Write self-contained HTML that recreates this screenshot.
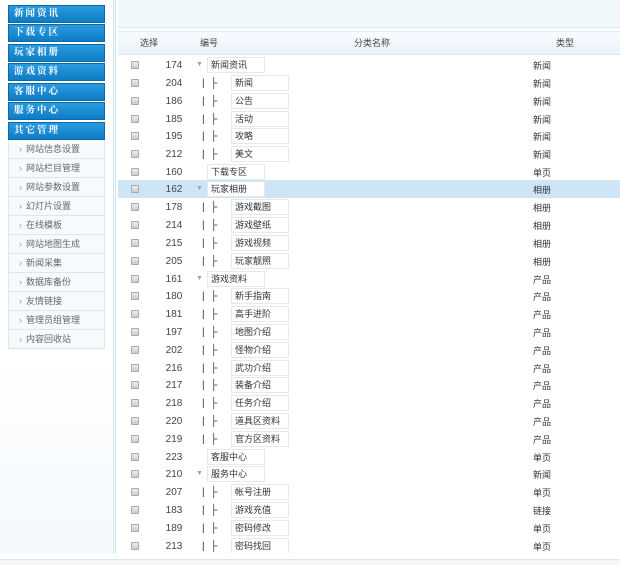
<!DOCTYPE html><html><head><meta charset="utf-8"><style>
*{margin:0;padding:0;box-sizing:border-box}
body{width:620px;height:565px;background:#fff;position:relative;overflow:hidden;font-family:"Liberation Sans","Noto Sans CJK SC",sans-serif;font-size:9px;color:#333}
.a{position:absolute}
.side{left:0;top:0;width:112px;height:560px;background:linear-gradient(#fff 0,#fff 360px,#f2f8fc 560px)}
.h{position:absolute;left:8px;width:97px;height:18px;background:linear-gradient(#2b9be0,#0e7cc4);color:#fff;font-weight:bold;font-size:9.5px;line-height:17px;padding-left:5px;border:1px solid #0a6aa8;font-family:"Liberation Serif","Noto Serif CJK SC",serif;letter-spacing:2px}
.s{position:absolute;left:8px;width:97px;height:19px;border:1px solid #dde7ee;border-top:none;background:#f7fafc;color:#666;font-size:9px;line-height:18px;padding-left:10px}
.s:before{content:"›";color:#999;margin-right:4px}
.row{position:absolute;left:118px;width:502px;height:18px;line-height:18px}
.cb{position:absolute;left:13px;top:5px;width:8px;height:8px;border:1px solid #aaa;background:linear-gradient(#eee,#ccc);border-radius:1px}
.n{position:absolute;left:45px;top:1px;width:22px;text-align:center;font-size:10px;color:#444}
.ar{position:absolute;left:78px;color:#8ab;font-size:7px}
.bx{position:absolute;top:1px;height:16px;width:58px;border:1px solid #e3e9ed;background:#fff;line-height:15px;padding-left:3px;font-size:9px;color:#333}
.t{position:absolute;left:415px;top:1px;font-size:9px}
.tr{position:absolute;left:84px;top:1px;font-size:10px;color:#333}
</style></head><body>
<div class="a side"></div>
<div class="h" style="top:5px">新闻资讯</div>
<div class="h" style="top:24px">下载专区</div>
<div class="h" style="top:44px">玩家相册</div>
<div class="h" style="top:63px">游戏资料</div>
<div class="h" style="top:83px">客服中心</div>
<div class="h" style="top:102px">服务中心</div>
<div class="h" style="top:122px">其它管理</div>
<div class="s" style="top:140px">网站信息设置</div>
<div class="s" style="top:159px">网站栏目管理</div>
<div class="s" style="top:178px">网站参数设置</div>
<div class="s" style="top:197px">幻灯片设置</div>
<div class="s" style="top:216px">在线模板</div>
<div class="s" style="top:235px">网站地图生成</div>
<div class="s" style="top:254px">新闻采集</div>
<div class="s" style="top:273px">数据库备份</div>
<div class="s" style="top:292px">友情链接</div>
<div class="s" style="top:311px">管理员组管理</div>
<div class="s" style="top:330px">内容回收站</div>
<div class="a" style="left:113px;top:0;width:1px;height:553px;background:#cfe3ef"></div>
<div class="a" style="left:115px;top:0;width:1px;height:553px;background:#cfe3ef"></div>
<div class="a" style="left:118px;top:0;width:502px;height:28px;background:#f1f8fc;border-bottom:1px solid #dbe9f1"></div>
<div class="a" style="left:118px;top:31px;width:502px;height:24px;background:linear-gradient(#f7fbfd,#eaf3f9);border-top:1px solid #e0ecf3;border-bottom:1px solid #dbe9f1;line-height:23px;font-size:9px;color:#444">
<span class="a" style="left:22px">选择</span><span class="a" style="left:82px">编号</span><span class="a" style="left:236px">分类名称</span><span class="a" style="left:438px">类型</span></div>
<div class="row" style="top:56px"><i class="cb"></i><span class="n">174</span><span class="ar">▼</span><span class="bx" style="left:89px">新闻资讯</span><span class="t">新闻</span></div>
<div class="row" style="top:74px"><i class="cb"></i><span class="n">204</span><span class="tr">|&nbsp;&nbsp;├</span><span class="bx" style="left:113px">新闻</span><span class="t">新闻</span></div>
<div class="row" style="top:92px"><i class="cb"></i><span class="n">186</span><span class="tr">|&nbsp;&nbsp;├</span><span class="bx" style="left:113px">公告</span><span class="t">新闻</span></div>
<div class="row" style="top:110px"><i class="cb"></i><span class="n">185</span><span class="tr">|&nbsp;&nbsp;├</span><span class="bx" style="left:113px">活动</span><span class="t">新闻</span></div>
<div class="row" style="top:127px"><i class="cb"></i><span class="n">195</span><span class="tr">|&nbsp;&nbsp;├</span><span class="bx" style="left:113px">攻略</span><span class="t">新闻</span></div>
<div class="row" style="top:145px"><i class="cb"></i><span class="n">212</span><span class="tr">|&nbsp;&nbsp;├</span><span class="bx" style="left:113px">美文</span><span class="t">新闻</span></div>
<div class="row" style="top:163px"><i class="cb"></i><span class="n">160</span><span class="bx" style="left:89px">下载专区</span><span class="t">单页</span></div>
<div class="row" style="top:180px;background:#cde5f7"><i class="cb"></i><span class="n">162</span><span class="ar">▼</span><span class="bx" style="left:89px">玩家相册</span><span class="t">相册</span></div>
<div class="row" style="top:198px"><i class="cb"></i><span class="n">178</span><span class="tr">|&nbsp;&nbsp;├</span><span class="bx" style="left:113px">游戏截图</span><span class="t">相册</span></div>
<div class="row" style="top:216px"><i class="cb"></i><span class="n">214</span><span class="tr">|&nbsp;&nbsp;├</span><span class="bx" style="left:113px">游戏壁纸</span><span class="t">相册</span></div>
<div class="row" style="top:234px"><i class="cb"></i><span class="n">215</span><span class="tr">|&nbsp;&nbsp;├</span><span class="bx" style="left:113px">游戏视频</span><span class="t">相册</span></div>
<div class="row" style="top:252px"><i class="cb"></i><span class="n">205</span><span class="tr">|&nbsp;&nbsp;├</span><span class="bx" style="left:113px">玩家靓照</span><span class="t">相册</span></div>
<div class="row" style="top:270px"><i class="cb"></i><span class="n">161</span><span class="ar">▼</span><span class="bx" style="left:89px">游戏资料</span><span class="t">产品</span></div>
<div class="row" style="top:287px"><i class="cb"></i><span class="n">180</span><span class="tr">|&nbsp;&nbsp;├</span><span class="bx" style="left:113px">新手指南</span><span class="t">产品</span></div>
<div class="row" style="top:305px"><i class="cb"></i><span class="n">181</span><span class="tr">|&nbsp;&nbsp;├</span><span class="bx" style="left:113px">高手进阶</span><span class="t">产品</span></div>
<div class="row" style="top:323px"><i class="cb"></i><span class="n">197</span><span class="tr">|&nbsp;&nbsp;├</span><span class="bx" style="left:113px">地图介绍</span><span class="t">产品</span></div>
<div class="row" style="top:341px"><i class="cb"></i><span class="n">202</span><span class="tr">|&nbsp;&nbsp;├</span><span class="bx" style="left:113px">怪物介绍</span><span class="t">产品</span></div>
<div class="row" style="top:359px"><i class="cb"></i><span class="n">216</span><span class="tr">|&nbsp;&nbsp;├</span><span class="bx" style="left:113px">武功介绍</span><span class="t">产品</span></div>
<div class="row" style="top:376px"><i class="cb"></i><span class="n">217</span><span class="tr">|&nbsp;&nbsp;├</span><span class="bx" style="left:113px">装备介绍</span><span class="t">产品</span></div>
<div class="row" style="top:394px"><i class="cb"></i><span class="n">218</span><span class="tr">|&nbsp;&nbsp;├</span><span class="bx" style="left:113px">任务介绍</span><span class="t">产品</span></div>
<div class="row" style="top:412px"><i class="cb"></i><span class="n">220</span><span class="tr">|&nbsp;&nbsp;├</span><span class="bx" style="left:113px">道具区资料</span><span class="t">产品</span></div>
<div class="row" style="top:430px"><i class="cb"></i><span class="n">219</span><span class="tr">|&nbsp;&nbsp;├</span><span class="bx" style="left:113px">官方区资料</span><span class="t">产品</span></div>
<div class="row" style="top:448px"><i class="cb"></i><span class="n">223</span><span class="bx" style="left:89px">客服中心</span><span class="t">单页</span></div>
<div class="row" style="top:465px"><i class="cb"></i><span class="n">210</span><span class="ar">▼</span><span class="bx" style="left:89px">服务中心</span><span class="t">新闻</span></div>
<div class="row" style="top:483px"><i class="cb"></i><span class="n">207</span><span class="tr">|&nbsp;&nbsp;├</span><span class="bx" style="left:113px">帐号注册</span><span class="t">单页</span></div>
<div class="row" style="top:501px"><i class="cb"></i><span class="n">183</span><span class="tr">|&nbsp;&nbsp;├</span><span class="bx" style="left:113px">游戏充值</span><span class="t">链接</span></div>
<div class="row" style="top:519px"><i class="cb"></i><span class="n">189</span><span class="tr">|&nbsp;&nbsp;├</span><span class="bx" style="left:113px">密码修改</span><span class="t">单页</span></div>
<div class="row" style="top:537px"><i class="cb"></i><span class="n">213</span><span class="tr">|&nbsp;&nbsp;├</span><span class="bx" style="left:113px">密码找回</span><span class="t">单页</span></div>
<div class="a" style="left:0;top:553px;width:620px;height:12px;background:#fff"></div>
<div class="a" style="left:0;top:559px;width:620px;height:1px;background:#dde3e8"></div>
<div class="a" style="left:0;top:560px;width:620px;height:5px;background:#f4f6f8"></div>
</body></html>
